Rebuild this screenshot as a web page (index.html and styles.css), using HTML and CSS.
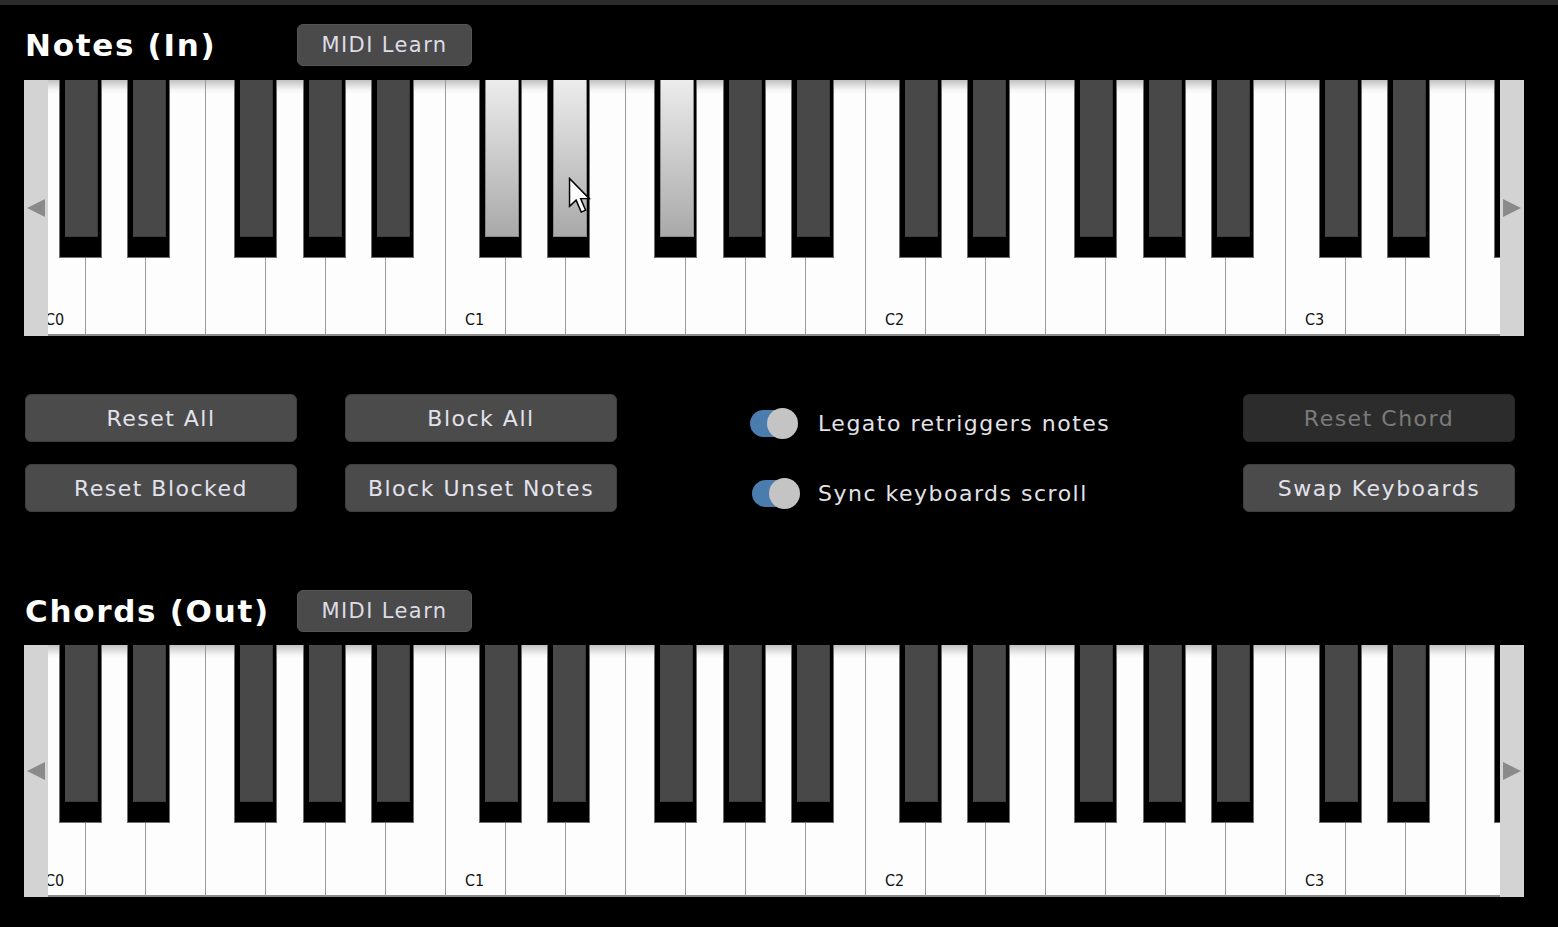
FILE: index.html
```html
<!DOCTYPE html>
<html>
<head>
<meta charset="utf-8">
<link rel="stylesheet" href="styles.css">
</head>
<body>
<div class="topbar"></div>
<div class="page">
  <div class="section-head first">
    <h2 class="title">Notes (In)</h2>
    <button class="btn learn">MIDI Learn</button>
  </div>
  <div class="keyboard kb-in">
    <div class="scroll left"><svg width="20" height="20" viewBox="0 0 20 20"><polygon points="1,10 19,1 19,19" fill="#8a8a8a"/></svg></div>
    <div class="keys">
      <div class="wk"><span class="bk cs"></span><span class="lbl">C0</span></div>
      <div class="wk"><span class="bk ds"></span></div>
      <div class="wk"></div>
      <div class="wk"><span class="bk fs"></span></div>
      <div class="wk"><span class="bk gs"></span></div>
      <div class="wk"><span class="bk as"></span></div>
      <div class="wk"></div>
      <div class="wk"><span class="bk cs on"></span><span class="lbl">C1</span></div>
      <div class="wk"><span class="bk ds on"><svg class="cursor" width="25" height="38" viewBox="0 0 17 26"><path d="M1,1 L1,20 L5.5,15.8 L9,24 L12,22.7 L8.6,14.8 L14.5,14.8 Z" fill="#fff" stroke="#000" stroke-width="1" stroke-linejoin="miter"/></svg></span></div>
      <div class="wk"></div>
      <div class="wk"><span class="bk fs on"></span></div>
      <div class="wk"><span class="bk gs"></span></div>
      <div class="wk"><span class="bk as"></span></div>
      <div class="wk"></div>
      <div class="wk"><span class="bk cs"></span><span class="lbl">C2</span></div>
      <div class="wk"><span class="bk ds"></span></div>
      <div class="wk"></div>
      <div class="wk"><span class="bk fs"></span></div>
      <div class="wk"><span class="bk gs"></span></div>
      <div class="wk"><span class="bk as"></span></div>
      <div class="wk"></div>
      <div class="wk"><span class="bk cs"></span><span class="lbl">C3</span></div>
      <div class="wk"><span class="bk ds"></span></div>
      <div class="wk"></div>
      <div class="wk"><span class="bk fs"></span></div>
      <div class="wk"><span class="bk gs"></span></div>
    </div>
    <div class="scroll right"><svg width="20" height="20" viewBox="0 0 20 20"><polygon points="19,10 1,1 1,19" fill="#8a8a8a"/></svg></div>
  </div>

  <div class="controls">
    <button class="btn action">Reset All</button>
    <button class="btn action">Block All</button>
    <label class="toggle-row"><span class="toggle"><span class="knob"></span></span><span class="toggle-text">Legato retriggers notes</span></label>
    <button class="btn action disabled">Reset Chord</button>
    <button class="btn action">Reset Blocked</button>
    <button class="btn action">Block Unset Notes</button>
    <label class="toggle-row second"><span class="toggle"><span class="knob"></span></span><span class="toggle-text">Sync keyboards scroll</span></label>
    <button class="btn action">Swap Keyboards</button>
  </div>

  <div class="section-head">
    <h2 class="title">Chords (Out)</h2>
    <button class="btn learn">MIDI Learn</button>
  </div>
  <div class="keyboard kb-out">
    <div class="scroll left"><svg width="20" height="20" viewBox="0 0 20 20"><polygon points="1,10 19,1 19,19" fill="#8a8a8a"/></svg></div>
    <div class="keys">
      <div class="wk"><span class="bk cs"></span><span class="lbl">C0</span></div>
      <div class="wk"><span class="bk ds"></span></div>
      <div class="wk"></div>
      <div class="wk"><span class="bk fs"></span></div>
      <div class="wk"><span class="bk gs"></span></div>
      <div class="wk"><span class="bk as"></span></div>
      <div class="wk"></div>
      <div class="wk"><span class="bk cs"></span><span class="lbl">C1</span></div>
      <div class="wk"><span class="bk ds"></span></div>
      <div class="wk"></div>
      <div class="wk"><span class="bk fs"></span></div>
      <div class="wk"><span class="bk gs"></span></div>
      <div class="wk"><span class="bk as"></span></div>
      <div class="wk"></div>
      <div class="wk"><span class="bk cs"></span><span class="lbl">C2</span></div>
      <div class="wk"><span class="bk ds"></span></div>
      <div class="wk"></div>
      <div class="wk"><span class="bk fs"></span></div>
      <div class="wk"><span class="bk gs"></span></div>
      <div class="wk"><span class="bk as"></span></div>
      <div class="wk"></div>
      <div class="wk"><span class="bk cs"></span><span class="lbl">C3</span></div>
      <div class="wk"><span class="bk ds"></span></div>
      <div class="wk"></div>
      <div class="wk"><span class="bk fs"></span></div>
      <div class="wk"><span class="bk gs"></span></div>
    </div>
    <div class="scroll right"><svg width="20" height="20" viewBox="0 0 20 20"><polygon points="19,10 1,1 1,19" fill="#8a8a8a"/></svg></div>
  </div>
</div>
</body>
</html>
```

FILE: styles.css
```css
* { box-sizing: border-box; }
html, body { margin: 0; padding: 0; background: #000; }
body {
  font-family: "DejaVu Sans", Verdana, sans-serif;
  color: #e4e4ea;
  width: 1558px;
  height: 927px;
  overflow: hidden;
}
.topbar { height: 5px; background: #2b2b2b; }
.page { padding: 0 34px 0 24px; }

.section-head {
  display: flex;
  align-items: center;
  height: 42px;
  margin-top: 78px;
}
.section-head.first { margin-top: 19px; }
.title {
  margin: 0;
  width: 273px;
  padding-left: 1px;
  font-size: 31px;
  font-weight: bold;
  letter-spacing: 1.7px;
  color: #fff;
  line-height: 40px;
}

.btn {
  font-family: "DejaVu Sans", Verdana, sans-serif;
  background: #4b4b4b;
  border: 1px solid #3e3e3e;
  border-radius: 6px;
  color: #e2e2ec;
  padding: 0;
  cursor: pointer;
}
.learn {
  width: 175px;
  height: 42px;
  font-size: 21px;
  letter-spacing: 1.4px;
  background: #4a4a4a;
  border-color: #555;
  color: #dcdce6;
}

.keyboard {
  display: flex;
  height: 256px;
  margin-top: 14px;
}
.kb-out { height: 252px; margin-top: 13px; }
.scroll {
  width: 24px;
  flex: none;
  background: #d3d3d3;
  display: flex;
  align-items: center;
  justify-content: center;
}
.scroll svg { display: block; }
.keys {
  flex: 1;
  display: flex;
  overflow: hidden;
  position: relative;
}
.wk {
  flex: none;
  width: 60px;
  height: 100%;
  position: relative;
  background: linear-gradient(#c2c2c2 0px, #f6f6f6 10px, #fdfdfd 14px);
  border-left: 1px solid #9a9a9a;
  border-bottom: 2px solid #8c8c8c;
}
.wk:first-child { margin-left: -23px; }
.lbl {
  position: absolute;
  left: 19px;
  bottom: 6px;
  font-family: "DejaVu Sans Condensed", "DejaVu Sans", sans-serif;
  font-size: 16px;
  color: #111;
  line-height: 16px;
}
.bk {
  position: absolute;
  top: 0;
  width: 43px;
  height: 178px;
  background: #000;
  border: 1px solid #6e6e6e;
  border-top: none;
  z-index: 2;
}
.bk::before {
  content: "";
  position: absolute;
  left: 5px;
  top: 0;
  width: 32px;
  height: 156px;
  background: #484848;
  border-right: 1px solid #3a3a3a;
  border-bottom: 1px solid #3c3c3c;
}
.bk.on::before {
  background: linear-gradient(#ececec, #c4c4c4 60%, #a9a9a9);
  border: 1px solid #8a8a8a;
  border-top: none;
}
.bk.cs { left: 33px; }
.bk.ds { left: 41px; }
.bk.fs { left: 28px; }
.bk.gs { left: 37px; }
.bk.as { left: 45px; }

.cursor {
  position: absolute;
  left: 20px;
  top: 97px;
  z-index: 3;
}

.controls {
  margin-top: 58px;
  margin-left: 1px;
  width: 1490px;
  display: grid;
  grid-template-columns: 272px 272px 1fr 272px;
  grid-auto-rows: 48px;
  column-gap: 48px;
  row-gap: 22px;
}
.action {
  font-size: 22px;
  letter-spacing: 1.5px;
  height: 48px;
}
.action.disabled {
  background: #2c2c2c;
  border-color: #262626;
  color: #7b7b7b;
}
.toggle-row {
  display: flex;
  align-items: center;
  padding-left: 85px;
  padding-top: 10px;
  font-size: 22px;
  letter-spacing: 1.5px;
  color: #e2e2e8;
}
.toggle-row.second { padding-left: 87px; }
.toggle {
  position: relative;
  width: 48px;
  height: 31px;
  flex: none;
  margin-right: 20px;
}
.toggle::before {
  content: "";
  position: absolute;
  left: 0;
  top: 2px;
  width: 44px;
  height: 27px;
  border-radius: 14px;
  background: #4a7cae;
}
.knob {
  position: absolute;
  right: 0;
  top: 0;
  width: 31px;
  height: 31px;
  border-radius: 50%;
  background: #c4c4c4;
}
.second .toggle { margin-right: 18px; }
```
